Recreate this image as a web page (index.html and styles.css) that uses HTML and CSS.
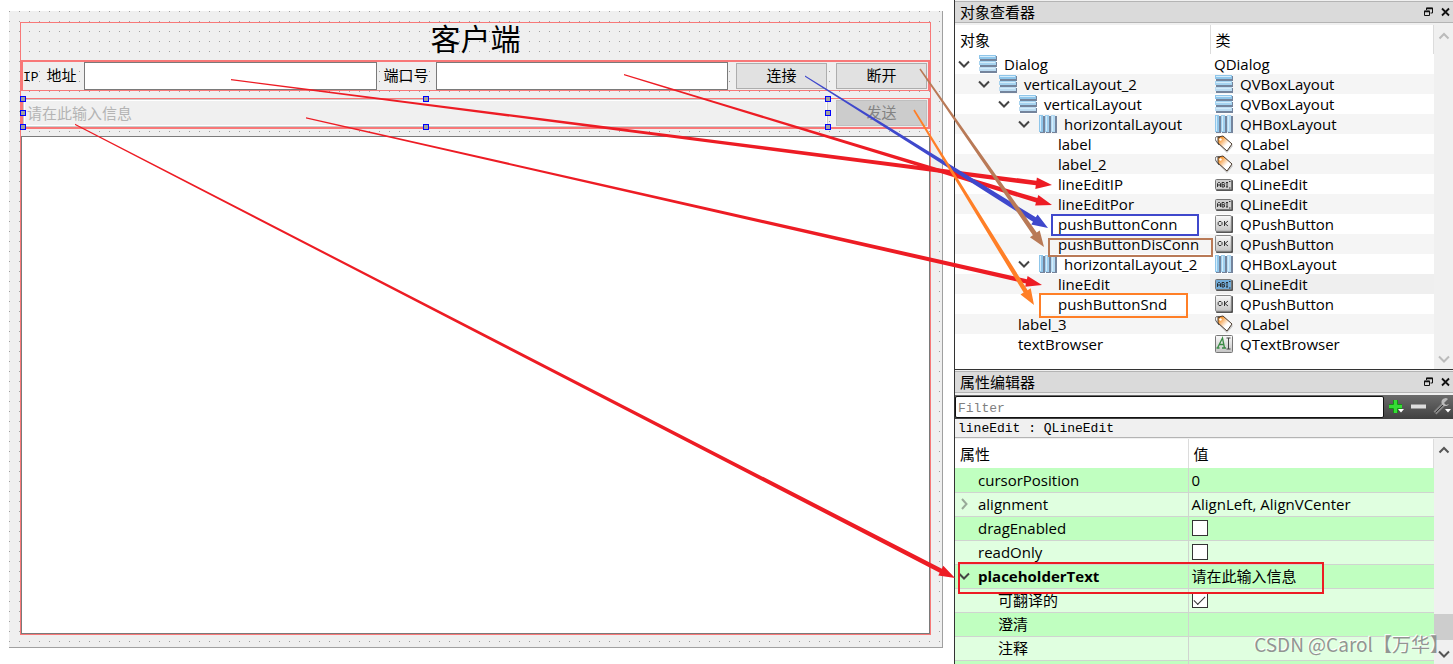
FILE: index.html
```html
<!DOCTYPE html>
<html lang="zh-CN">
<head>
<meta charset="utf-8">
<title>客户端</title>
<link rel="stylesheet" href="styles.css">
</head>
<body>
<svg class="sprite" aria-hidden="true">
  <defs>
    <linearGradient id="g-blue" x1="0" y1="0" x2="1" y2="0"><stop offset="0" stop-color="#7cc0ea"/><stop offset="1" stop-color="#cbe8fa"/></linearGradient>
    <linearGradient id="g-grey" x1="0" y1="0" x2="0" y2="1"><stop offset="0" stop-color="#fafafa"/><stop offset="1" stop-color="#c4c4c4"/></linearGradient>
    <linearGradient id="g-orange" x1="0" y1="0" x2="1" y2="1"><stop offset="0.2" stop-color="#f59a3c"/><stop offset="0.6" stop-color="#fff"/></linearGradient>
  </defs>
  <symbol id="i-vbox" viewBox="0 0 18 18">
    <path fill="#74849c" d="M1 1h17v5H1zM1 7h17v5H1zM1 13h17v5H1z"/>
    <path fill="#8fc6ea" d="M0 0h17v4H0z"/><path fill="#a5d3f0" d="M0 6h17v4H0z"/><path fill="#bcdcf2" d="M0 12h17v4H0z"/>
    <path fill="#d5ecfa" d="M1 1h15v1H1zM1 7h15v1H1zM1 13h15v1H1z"/>
  </symbol>
  <symbol id="i-hbox" viewBox="0 0 18 18">
    <path fill="#74849c" d="M1 1h5v17H1zM7 1h5v17H7zM13 1h5v17h-5z"/>
    <path fill="#8fc6ea" d="M0 0h4v17H0z"/><path fill="#a0d0ef" d="M6 0h4v17H6z"/><path fill="#b4daf3" d="M12 0h4v17h-4z"/>
    <path fill="#d5ecfa" d="M1 1h1v15H1zM7 1h1v15H7zM13 1h1v15h-1z"/>
  </symbol>
  <symbol id="i-tag" viewBox="0 0 18 18">
    <path d="M8 2l10 9-6 7L3 9z" fill="#999" opacity=".5"/>
    <path d="M3 2l5-1 9 8-5 7-9-8z" fill="url(#g-orange)" stroke="#4a3a2c"/>
    <path d="M5 3C2 0-1 2 1 6l3 4" fill="none" stroke="#333" stroke-width=".8"/>
    <circle cx="5.500" cy="4.500" r="1.200" fill="#fff"/>
  </symbol>
  <symbol id="i-edit" viewBox="0 0 18 18">
    <rect x="1" y="5" width="17" height="11" rx="1" fill="#555"/>
    <rect x=".5" y="4.500" width="16" height="10" rx="1" fill="currentColor" stroke="#777"/>
    <path d="M2.500 12V8.500l1-1h1l1 1V12M2.500 10h3M7 7.500V12h2l.8-1-.8-1.200.8-1.200-.8-1.100zM7 9.800h2M11 7.500h2M11 12h2M12 7.500V12M14 6.500h1.500M14 13h1.500" fill="none" stroke="#222" stroke-width=".9"/>
  </symbol>
  <symbol id="i-ok" viewBox="0 0 18 18">
    <rect x="1" y="1" width="17" height="17" rx="1" fill="#555"/>
    <rect x=".5" y=".5" width="15.800" height="15.800" rx="1" fill="url(#g-grey)" stroke="#888"/>
    <path d="M4 6.500h2l1 1v2l-1 1H4l-.8-1v-2zM9.500 6v5M13 6l-3 2.500 3 2.500" fill="none" stroke="#333"/>
  </symbol>
  <symbol id="i-text" viewBox="0 0 18 18">
    <rect x=".5" y=".5" width="17" height="17" rx="1" fill="url(#g-grey)" stroke="#777"/>
    <path d="M2.500 13l5-10 2 10M4.500 9.500h4M1.500 13h3M7 13h4" fill="none" stroke="#3a8b45" stroke-width="1.300"/>
    <path d="M11.500 3h4M11.500 14h4M13.500 3v11" fill="none" stroke="#444"/>
  </symbol>
  <symbol id="i-down" viewBox="0 0 12 12"><path d="M1 3.500l5 5 5-5" fill="none" stroke="currentColor" stroke-width="2"/></symbol>
  <symbol id="i-up" viewBox="0 0 12 12"><path d="M1.500 8.500L6 4l4.500 4.500" fill="none" stroke="currentColor" stroke-width="2"/></symbol>
  <symbol id="i-right" viewBox="0 0 12 12"><path d="M4 1l4.500 5L4 11" fill="none" stroke="currentColor" stroke-width="2"/></symbol>
  <symbol id="i-float" viewBox="0 0 10 10"><path d="M3 1h6v5H7M3 1v2M1 4h5v4.500H1z" fill="none" stroke="#111"/><path d="M2.500 1.500h7M.5 4.500h6" stroke="#111" stroke-width="1.500"/></symbol>
  <symbol id="i-close" viewBox="0 0 10 10"><path d="M1.500 1.500l7 7M8.500 1.500l-7 7" stroke="#111" stroke-width="1.800"/></symbol>
</svg>

<main class="workspace">
  <section class="stage">
    <form class="dialog">
      <div class="layout">
        <h1 class="dialog-title">客户端</h1>
        <div class="form-row connect-row">
          <label class="field-label" for="ip"><span class="latin">IP </span>地址</label>
          <input class="line-edit" id="ip" type="text">
          <label class="field-label" for="port">端口号</label>
          <input class="line-edit" id="port" type="text">
          <button class="push" type="button">连接</button>
          <button class="push" type="button">断开</button>
        </div>
        <div class="form-row send-row">
          <div class="selected">
            <input class="line-edit muted" type="text" aria-label="信息" placeholder="请在此输入信息" disabled>
            <i class="handle left top"></i><i class="handle center top"></i><i class="handle right top"></i>
            <i class="handle left middle"></i><i class="handle right middle"></i>
            <i class="handle left bottom"></i><i class="handle center bottom"></i><i class="handle right bottom"></i>
          </div>
          <button class="push" type="button" disabled>发送</button>
        </div>
        <div class="text-browser"></div>
      </div>
    </form>
  </section>

  <aside class="docks">
    <section class="dock inspector">
      <header class="dock-title"><h2>对象查看器</h2>
        <button type="button" aria-label="浮动"><svg><use href="#i-float"/></svg></button><button type="button" aria-label="关闭"><svg><use href="#i-close"/></svg></button>
      </header>
      <div class="dock-body">
        <table class="tree">
          <thead><tr><th>对象</th><th>类</th></tr></thead>
          <tbody>
            <tr><td><div class="node"><svg class="chev"><use href="#i-down"/></svg><svg class="ico"><use href="#i-vbox"/></svg>Dialog</div></td><td><div class="kind plain">QDialog</div></td></tr>
            <tr><td><div class="node d1"><svg class="chev"><use href="#i-down"/></svg><svg class="ico"><use href="#i-vbox"/></svg>verticalLayout_2</div></td><td><div class="kind"><svg class="ico"><use href="#i-vbox"/></svg>QVBoxLayout</div></td></tr>
            <tr><td><div class="node d2"><svg class="chev"><use href="#i-down"/></svg><svg class="ico"><use href="#i-vbox"/></svg>verticalLayout</div></td><td><div class="kind"><svg class="ico"><use href="#i-vbox"/></svg>QVBoxLayout</div></td></tr>
            <tr><td><div class="node d3"><svg class="chev"><use href="#i-down"/></svg><svg class="ico"><use href="#i-hbox"/></svg>horizontalLayout</div></td><td><div class="kind"><svg class="ico"><use href="#i-hbox"/></svg>QHBoxLayout</div></td></tr>
            <tr><td><div class="node d4 leaf">label</div></td><td><div class="kind"><svg class="ico"><use href="#i-tag"/></svg>QLabel</div></td></tr>
            <tr><td><div class="node d4 leaf">label_2</div></td><td><div class="kind"><svg class="ico"><use href="#i-tag"/></svg>QLabel</div></td></tr>
            <tr><td><div class="node d4 leaf">lineEditIP</div></td><td><div class="kind"><svg class="ico edit"><use href="#i-edit"/></svg>QLineEdit</div></td></tr>
            <tr><td><div class="node d4 leaf">lineEditPor</div></td><td><div class="kind"><svg class="ico edit"><use href="#i-edit"/></svg>QLineEdit</div></td></tr>
            <tr><td><div class="node d4 leaf">pushButtonConn</div></td><td><div class="kind"><svg class="ico"><use href="#i-ok"/></svg>QPushButton</div></td></tr>
            <tr><td><div class="node d4 leaf">pushButtonDisConn</div></td><td><div class="kind"><svg class="ico"><use href="#i-ok"/></svg>QPushButton</div></td></tr>
            <tr><td><div class="node d3"><svg class="chev"><use href="#i-down"/></svg><svg class="ico"><use href="#i-hbox"/></svg>horizontalLayout_2</div></td><td><div class="kind"><svg class="ico"><use href="#i-hbox"/></svg>QHBoxLayout</div></td></tr>
            <tr class="current"><td><div class="node d4 leaf">lineEdit</div></td><td><div class="kind"><svg class="ico edit active"><use href="#i-edit"/></svg>QLineEdit</div></td></tr>
            <tr><td><div class="node d4 leaf">pushButtonSnd</div></td><td><div class="kind"><svg class="ico"><use href="#i-ok"/></svg>QPushButton</div></td></tr>
            <tr><td><div class="node d2 leaf">label_3</div></td><td><div class="kind"><svg class="ico"><use href="#i-tag"/></svg>QLabel</div></td></tr>
            <tr><td><div class="node d2 leaf">textBrowser</div></td><td><div class="kind"><svg class="ico"><use href="#i-text"/></svg>QTextBrowser</div></td></tr>
          </tbody>
        </table>
        <div class="scrollbar idle"><svg><use href="#i-up"/></svg><span></span><svg><use href="#i-down"/></svg></div>
      </div>
    </section>

    <section class="dock properties">
      <header class="dock-title"><h2>属性编辑器</h2>
        <button type="button" aria-label="浮动"><svg><use href="#i-float"/></svg></button><button type="button" aria-label="关闭"><svg><use href="#i-close"/></svg></button>
      </header>
      <div class="filter-bar">
        <input class="filter" type="text" placeholder="Filter" aria-label="Filter">
        <button type="button" aria-label="添加"><svg viewBox="0 0 20 20"><path d="M3 9.500h13M9.500 3v13" stroke="#087a08" stroke-width="5"/><path d="M3 9.500h13M9.500 3v13" stroke="#35dc35" stroke-width="3.500"/><path d="M12 12h6l-3 3.500z" fill="#fff"/></svg></button>
        <button type="button" aria-label="删除"><svg viewBox="0 0 20 20"><path d="M2 9.500h15" stroke="#ddd" stroke-width="4"/></svg></button>
        <button type="button" aria-label="配置"><svg viewBox="0 0 20 20"><path d="M3 16L12 7" stroke="#888" stroke-width="4"/><path d="M3.500 15.500L12 7" stroke="#333" stroke-width="1"/><path d="M16 2a4 4 0 1 0 1 5l-3 1-2-2z" fill="#bbb"/><path d="M13 12h6l-3 3.500z" fill="#fff"/></svg></button>
      </div>
      <div class="subject">lineEdit : QLineEdit</div>
      <div class="dock-body">
        <table class="props">
          <thead><tr><th>属性</th><th>值</th></tr></thead>
          <tbody>
            <tr><td><div class="prop">cursorPosition</div></td><td>0</td></tr>
            <tr><td><div class="prop expandable closed"><svg class="chev"><use href="#i-right"/></svg>alignment</div></td><td>AlignLeft, AlignVCenter</td></tr>
            <tr><td><div class="prop"><label for="drag">dragEnabled</label></div></td><td><input class="tick" id="drag" type="checkbox"></td></tr>
            <tr><td><div class="prop"><label for="ro">readOnly</label></div></td><td><input class="tick" id="ro" type="checkbox"></td></tr>
            <tr><td><div class="prop expandable changed"><svg class="chev"><use href="#i-down"/></svg>placeholderText</div></td><td>请在此输入信息</td></tr>
            <tr><td><div class="prop child"><label for="tr">可翻译的</label></div></td><td><input class="tick" id="tr" type="checkbox" checked></td></tr>
            <tr><td><div class="prop child">澄清</div></td><td></td></tr>
            <tr><td><div class="prop child">注释</div></td><td></td></tr>
            <tr><td><div class="prop"></div></td><td></td></tr>
          </tbody>
        </table>
        <div class="scrollbar"><svg><use href="#i-up"/></svg><span></span><b class="thumb"></b><svg><use href="#i-down"/></svg></div>
      </div>
    </section>
  </aside>

  <svg class="annotations" width="1453" height="664" viewBox="0 0 1453 664" aria-hidden="true">
    <g fill="#ed1c24">
      <path d="M231 80.200L1035.800 185.300 1035.300 189 1052 185 1036.900 177.500 1036.400 180.700 231 79z"/>
      <path d="M624 75.200L1036 202.500 1035.100 205.600 1052 205 1038.300 195 1037.400 198.100 624 74z"/>
      <path d="M306 118.500L1025.900 283.600 1025.200 286.800 1042 285 1027.600 276 1026.900 279.200 306 117.300z"/>
      <path d="M75 125L939.700 572.700 938.300 575.600 955 578 943.300 565.800 941.900 568.700 75 123.700z"/>
    </g>
    <path fill="#3f48cc" d="M805 76.800L1033 221.700 1031.200 224.600 1048 228 1037.600 214.400 1035.800 217.300 805 75.500z"/>
    <path fill="#b97a57" d="M919.400 69.500L1032.900 235.200 1029.900 237.300 1044 247 1039.700 230.500 1036.700 232.600 920.600 68.500z"/>
    <path fill="#ff7f27" d="M913.300 110.500L1023.600 292.600 1020.500 294.500 1034 305 1030.700 288.300 1027.600 290.200 914.700 109.500z"/>
    <g fill="none" stroke-width="2">
      <rect x="1052" y="215" width="146" height="20" stroke="#3f48cc"/>
      <rect x="1049" y="239" width="163" height="17" stroke="#b97a57"/>
      <rect x="1040" y="294" width="147" height="23" stroke="#ff7f27"/>
      <rect x="959" y="563" width="364" height="30" stroke="#ed1c24"/>
    </g>
  </svg>
  <div class="watermark">CSDN @Carol【万华】</div>
</main>
</body>
</html>
```
FILE: styles.css
```css
* { box-sizing: border-box; }

body {
  margin: 0;
  background: #fff;
  color: #000;
  font: 15px/20px "Open Sans", "Noto Sans CJK SC", sans-serif;
}

button, input { font: inherit; color: inherit; }
.sprite { position: absolute; width: 0; height: 0; }

.workspace {
  position: relative;
  display: flex;
  height: 100vh;
  overflow: hidden;
}

/* Form canvas */
.stage {
  display: flex;
  flex: 1;
  min-width: 0;
  padding: 11px 11px 16px 9px;
}

.dialog {
  display: flex;
  flex: 1;
  padding: 11px 11px 12px;
  border: solid #a0a0a0;
  border-width: 0 1px 1px 0;
  background: conic-gradient(from 270deg at 1px 1px, #a0a0a0 90deg, transparent 0) 0 0 / 10px 10px #efefef;
  font-family: "Noto Sans CJK SC", sans-serif;
}

.layout {
  display: flex;
  flex: 1;
  flex-direction: column;
  gap: 7px;
  border: 1px solid #f87878;
}

.dialog-title {
  height: 37px;
  margin: 0 0 -7px;
  font-size: 30px;
  font-weight: 400;
  line-height: 28px;
  text-align: center;
}

.form-row {
  display: grid;
  grid-template-rows: 28px;
  column-gap: 7px;
  border: 2px solid #f87878;
}

.connect-row {
  grid-template-columns: 54px 1fr 45px 1fr 93px 93px;
  border-bottom-width: 1px;
}

.send-row {
  grid-template-columns: 1fr 93px;
  border-top-width: 1px;
}

.field-label { line-height: 26px; white-space: pre; }
.latin { font: 13px/20px "Liberation Mono", monospace; }

.line-edit {
  width: 100%;
  min-width: 0;
  height: 28px;
  padding: 0 3px;
  border: 1px solid #7a7a7a;
  border-radius: 0;
  background: #fff;
}

.line-edit.muted {
  display: block;
  padding-bottom: 2px;
  border-color: #ccc;
  background: #f0f0f0;
  box-shadow: inset 0 0 0 1px #fff;
}

.line-edit.muted::placeholder { color: #b4b4b4; }

.push {
  margin: 1px;
  padding: 0 0 2px;
  border: 1px solid #adadad;
  background: #e1e1e1;
}

.push:disabled { border-color: #bfbfbf; background: #ccc; color: #838383; }

.selected { position: relative; }

.handle {
  position: absolute;
  width: 6px;
  height: 6px;
  margin: -3px;
  border: 1px solid #00f;
  background: #a0a0a0;
}

.left { left: 0; }
.center { left: 50%; }
.right { left: 100%; }
.top { top: 0; }
.middle { top: 50%; }
.bottom { top: 100%; }

.text-browser { flex: 1; border: 1px solid #7a7a7a; background: #fff; }

/* Dock column */
.docks {
  display: flex;
  flex: 0 0 499px;
  flex-direction: column;
  border-left: 1px solid #333;
  background: #f0f0f0;
}

.dock { display: flex; flex-direction: column; }
.inspector { border-bottom: 1px solid #333; }
.properties { flex: 1; min-height: 0; }

.dock-title {
  display: flex;
  align-items: center;
  gap: 6px;
  height: 22px;
  margin: 1px 0 2px;
  padding: 0 2px 0 5px;
  border: solid #b4b4b4;
  border-width: 1px 0;
  background: #dadada;
}

.dock-title h2 { flex: 1; margin: 0; font-size: 15px; font-weight: 400; }

.dock-title button, .filter-bar button {
  display: block;
  padding: 0;
  border: 0;
  background: none;
}

.dock-title svg { display: block; width: 11px; height: 10px; }

.dock-body { display: flex; flex: 1; min-height: 0; overflow: hidden; background: #fff; }

table {
  flex: 1;
  align-self: flex-start;
  border-collapse: collapse;
  table-layout: fixed;
}

th { padding: 0 5px; font-weight: 400; text-align: left; }
th + th { border-left: 1px solid #dcdcdc; }
th:last-child { border-right: 1px solid #dcdcdc; }
td { padding: 0; }

.tree { margin-bottom: 15px; }
.tree th { height: 29px; }
.tree th:first-child { width: 255px; }
.tree tbody tr:nth-child(even) { background: #f5f5f5; }
.tree .current td:last-child { background: #efefef; }

.node, .kind { display: flex; align-items: center; height: 20px; white-space: nowrap; }
.node { padding-left: 3px; }
.d1 { padding-left: 23px; }
.d2 { padding-left: 43px; }
.d3 { padding-left: 63px; }
.d4 { padding-left: 83px; }
.node.leaf::before { content: ""; width: 20px; }
.kind { padding-left: 5px; }
.kind.plain { padding-left: 4px; }

.chev { flex: none; width: 12px; height: 12px; margin-right: 9px; color: #444; }
.ico { flex: none; width: 18px; height: 18px; margin-right: 7px; }
.edit { color: #d0d0d0; }
.edit.active { color: #72acd8; }

.scrollbar {
  display: flex;
  flex: 0 0 19px;
  flex-direction: column;
  align-items: center;
  padding: 5px 0 4px;
  background: #f0f0f0;
  color: #555;
}

.scrollbar span { flex: 1; }
.scrollbar svg { flex: none; width: 12px; height: 12px; }
.scrollbar.idle { color: #bbb; }
.thumb { width: 100%; height: 26px; margin-bottom: 8px; background: #cdcdcd; }

/* Property editor */
.filter-bar {
  display: flex;
  align-items: center;
  height: 24px;
  padding: 1px 0;
  background: linear-gradient(#6c6c6c, #404040);
}

.filter {
  flex: 1;
  min-width: 0;
  height: 22px;
  padding: 2px 2px 0;
  border: 1px solid #111;
  border-radius: 2px;
  background: #fff;
  font-family: "Liberation Mono", monospace;
  font-size: 13px;
}

.filter::placeholder { color: #808080; }
.filter-bar button { width: 23px; }
.filter-bar svg { display: block; width: 20px; height: 20px; margin: 0 auto; }

.subject {
  height: 19px;
  margin-bottom: 1px;
  padding-left: 3px;
  border-bottom: 1px solid #b4b4b4;
  font: 13px/20px "Liberation Mono", monospace;
}

.props th { height: 29px; }
.props th:first-child { width: 233px; }
.props td { height: 24px; border-bottom: 1px solid #d0d4d0; background: #e0ffe0; }
.props tr:nth-child(odd) td { background: #c0ffc0; }
.props td + td { padding-left: 3px; border-left: 1px solid #d0d4d0; }

.prop { display: flex; align-items: center; padding-left: 23px; }
.prop.expandable { padding-left: 3px; }
.prop .chev { margin-right: 8px; }
.prop.closed .chev { color: #9a9; }
.prop.changed { font-weight: 700; }
.prop.child { padding-left: 43px; }

.tick {
  display: flex;
  align-items: center;
  justify-content: center;
  width: 16px;
  height: 16px;
  margin: 0;
  border: 1px solid #333;
  background: #fff;
  appearance: none;
}

.tick:checked::after {
  content: "";
  width: 10px;
  height: 5px;
  margin-bottom: 3px;
  border: solid #333;
  border-width: 0 0 1px 1px;
  transform: rotate(-45deg);
}

/* Overlays */
.annotations { position: absolute; top: 0; left: 0; pointer-events: none; }

.watermark {
  position: absolute;
  right: 4px;
  bottom: 7px;
  color: #929592;
  font: 19px/26px "Noto Sans CJK SC", sans-serif;
  text-shadow: -1px -1px 0 #fff;
}
```
